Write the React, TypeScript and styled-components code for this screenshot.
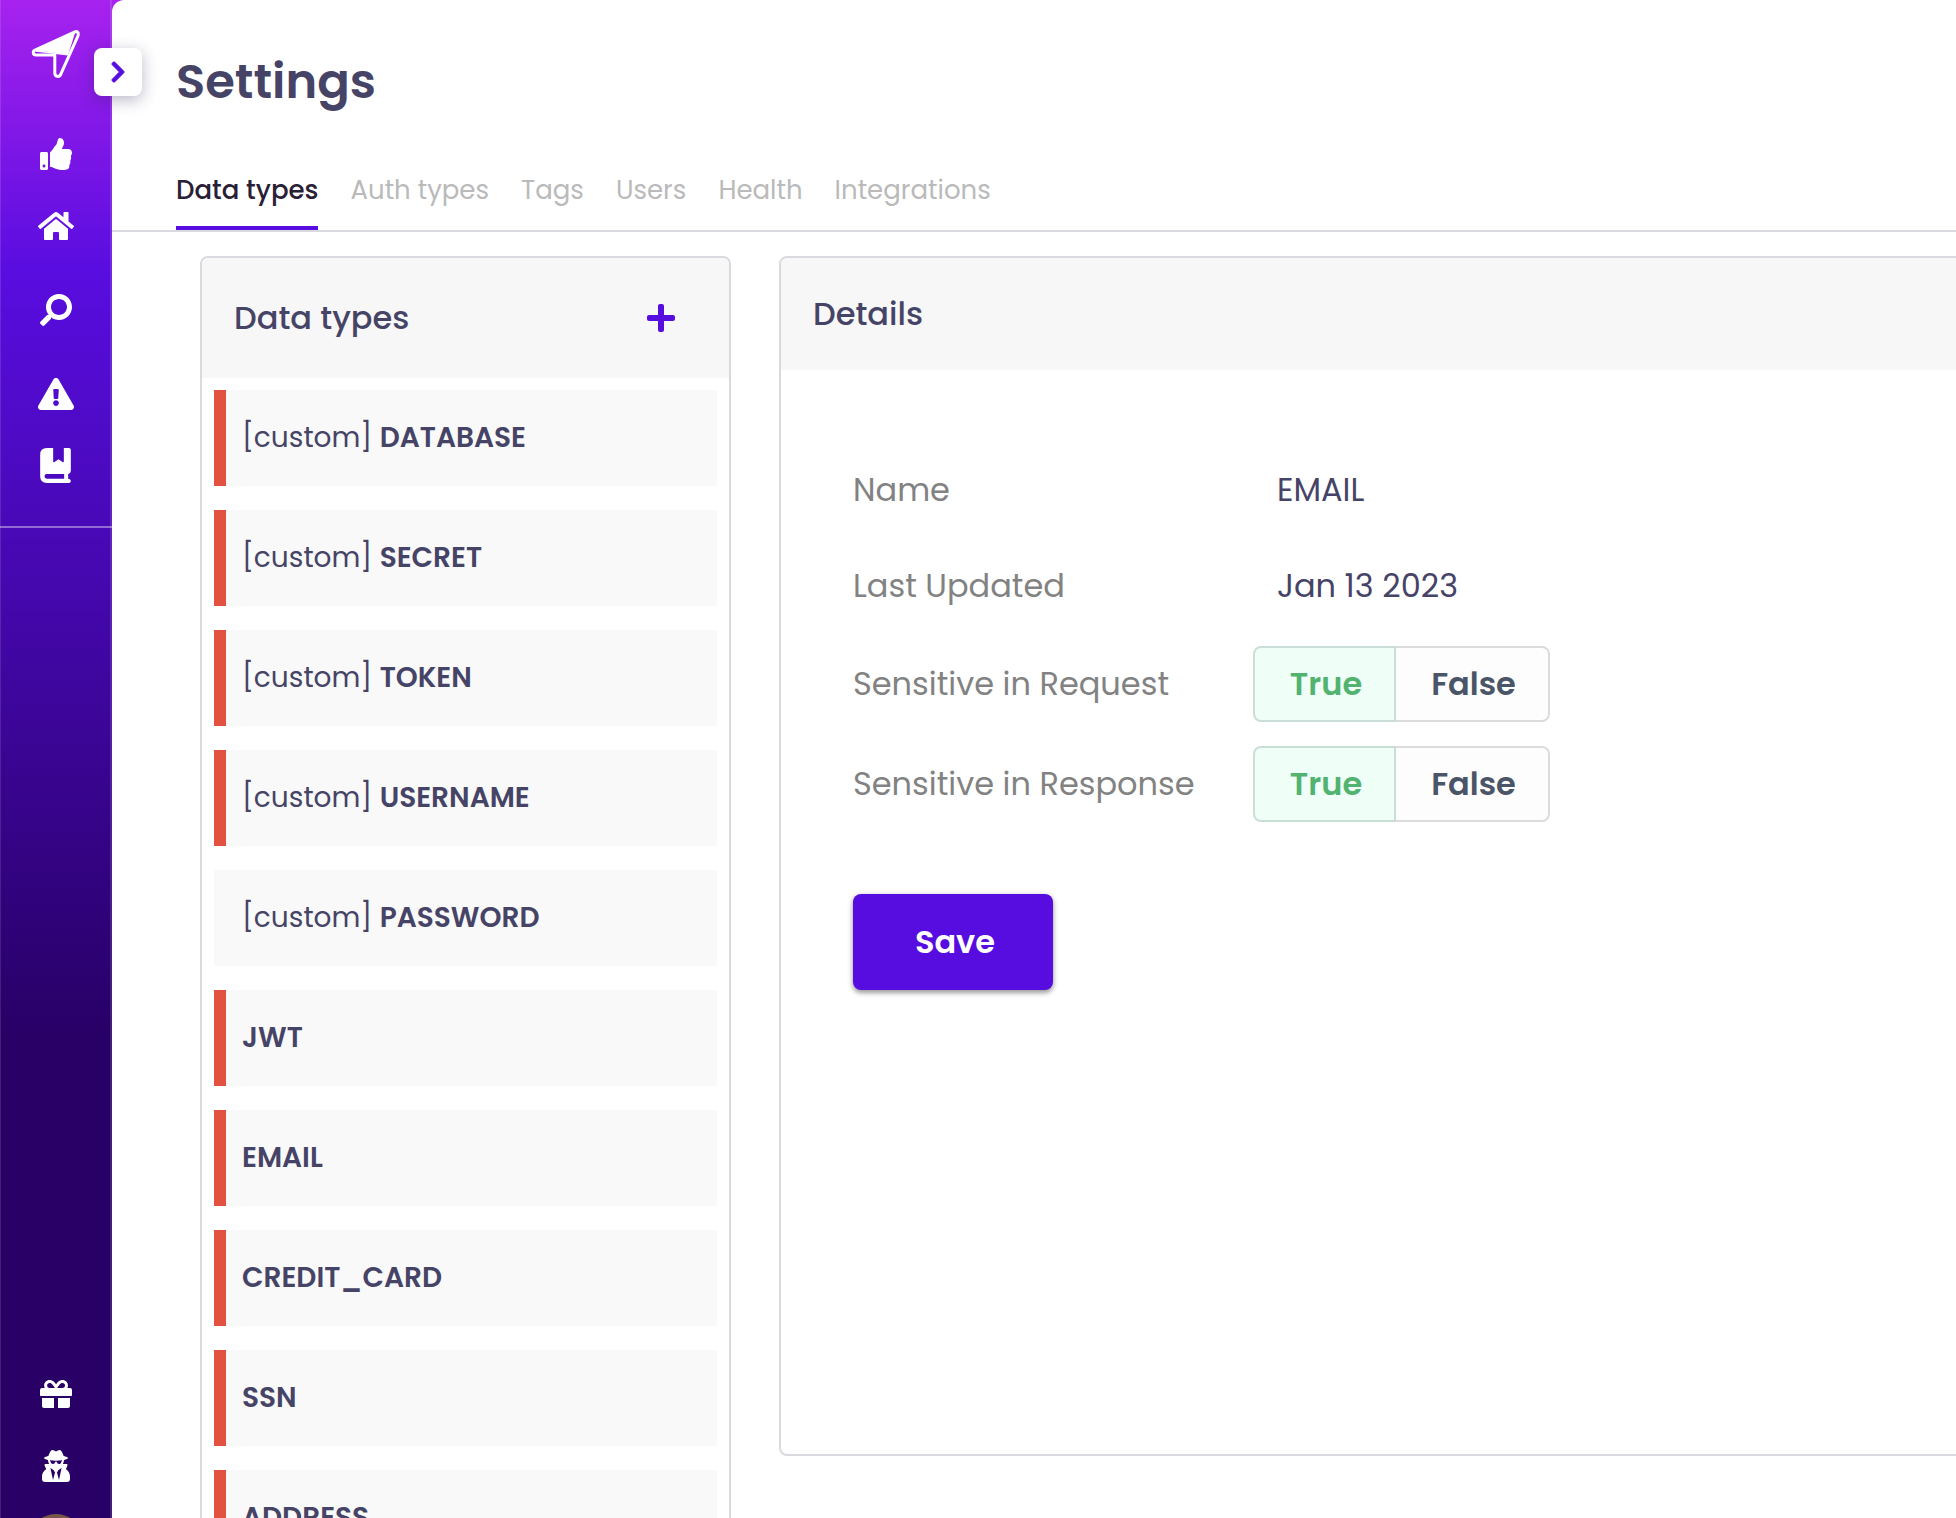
import React from 'react';
import styled, { createGlobalStyle } from 'styled-components';
import {
  FaChevronRight,
  FaExclamationTriangle,
  FaGift,
  FaHome,
  FaPlus,
  FaSearch,
  FaThumbsUp,
  FaUserSecret,
} from 'react-icons/fa';

const color = {
  violet: '#570ddf',
  ink: '#464466',
  line: '#d9d9e0',
  danger: '#e25241',
};

const GlobalStyle = createGlobalStyle`
  *, *::before, *::after { box-sizing: border-box; }
  body {
    margin: 0;
    overflow: hidden;
    background: #fff;
    color: ${color.ink};
    font-family: Poppins, Inter, 'Open Sans', sans-serif;
  }
  button { font: inherit; }
`;

const Shell = styled.div`
  display: flex;
  height: 1518px;
  overflow: hidden;
  background: #a722ee;
`;

const Sidebar = styled.nav`
  position: relative;
  z-index: 1;
  flex: none;
  display: flex;
  flex-direction: column;
  width: 112px;
  height: 1518px;
  border-left: 1px solid rgba(255, 255, 255, 0.12);
  border-right: 2px solid rgba(255, 255, 255, 0.12);
  background: linear-gradient(180deg, #a722ee 0, #590de0 270px, #280066 1035px);
  background-origin: border-box;
  color: #fff;
`;

const LogoArea = styled.div`
  display: flex;
  flex: none;
  justify-content: center;
  height: 118px;
  padding-top: 28px;
  padding-left: 1px;
`;

const NavItem = styled.a<{ $size?: number; $spaced?: boolean; $flip?: boolean }>`
  display: flex;
  flex: none;
  align-items: center;
  justify-content: center;
  height: 72px;
  margin-top: ${(p) => (p.$spaced ? 12 : 0)}px;
  padding-left: 1px;
  font-size: ${(p) => p.$size ?? 32}px;

  svg {
    transform: ${(p) => (p.$flip ? 'scaleX(-1)' : 'none')};
  }
`;

const NavDivider = styled.div`
  flex: none;
  height: 2px;
  margin: 24px -2px 0 -1px;
  background: rgba(255, 255, 255, 0.4);
`;

const NavFooter = styled.div`
  display: flex;
  flex-direction: column;
  align-items: center;
  height: 160px;
  margin-top: auto;
`;

const Avatar = styled.div`
  flex: none;
  width: 56px;
  height: 56px;
  margin-top: 12px;
  margin-left: 1px;
  border-radius: 50%;
  background: #7a5648;
`;

const ExpandButton = styled.button`
  position: absolute;
  top: 48px;
  left: 93px;
  display: flex;
  align-items: center;
  justify-content: center;
  width: 48px;
  height: 48px;
  padding: 0;
  border: 0;
  border-radius: 8px;
  background: #fff;
  box-shadow: 0 4px 16px rgba(40, 35, 80, 0.32);
  color: ${color.violet};

  svg {
    width: 24px;
    height: 24px;
    stroke: currentColor;
    stroke-width: 16px;
  }
`;

const Main = styled.main`
  flex: 1;
  min-width: 0;
  overflow: hidden;
  border-top-left-radius: 12px;
  background: #fff;
`;

const Title = styled.h1`
  margin: 0;
  padding: 52px 0 0 64px;
  font-size: 48px;
  font-weight: 600;
  line-height: 60px;
`;

const Tabs = styled.div`
  display: flex;
  align-items: flex-end;
  gap: 32px;
  height: 120px;
  padding-left: 64px;
  border-bottom: 2px solid ${color.line};
`;

const Tab = styled.div<{ $active?: boolean }>`
  padding-bottom: ${(p) => (p.$active ? 20 : 24)}px;
  border-bottom: ${(p) => (p.$active ? `4px solid ${color.violet}` : '0')};
  color: ${(p) => (p.$active ? '#2a2036' : '#bababa')};
  font-size: 26px;
  font-weight: ${(p) => (p.$active ? 500 : 400)};
  line-height: 32px;
  white-space: nowrap;
`;

const Columns = styled.div`
  display: flex;
  align-items: flex-start;
  gap: 48px;
  padding: 24px 0 0 88px;
`;

const Card = styled.section<{ $width: number; $height: number }>`
  flex: none;
  width: ${(p) => p.$width}px;
  height: ${(p) => p.$height}px;
  overflow: hidden;
  border: 2px solid ${color.line};
  border-radius: 8px;
`;

const CardHeader = styled.header<{ $height: number }>`
  display: flex;
  align-items: center;
  justify-content: space-between;
  height: ${(p) => p.$height}px;
  padding: 0 54px 0 32px;
  background: #f7f7f7;
  font-size: 32px;
  font-weight: 500;
`;

const AddIcon = styled(FaPlus)`
  width: 28px;
  height: 32px;
  color: ${color.violet};
`;

const TypeList = styled.div`
  display: flex;
  flex-direction: column;
  gap: 24px;
  padding: 12px;
`;

const TypeRow = styled.div<{ $sensitive: boolean }>`
  flex: none;
  height: 96px;
  padding: 0 16px;
  border-left: 12px solid ${(p) => (p.$sensitive ? color.danger : 'transparent')};
  background: #f9f9f9;
  font-size: 28px;
  line-height: 95px;
`;

const TypeName = styled.strong`
  font-weight: 600;
`;

const Fields = styled.div`
  padding: 72px 0 0 72px;
`;

const FieldRow = styled.div<{ $height: number }>`
  display: grid;
  grid-template-columns: 400px auto;
  align-items: center;
  height: ${(p) => p.$height}px;
  font-size: 32px;
`;

const FieldLabel = styled.span`
  color: #828282;
`;

const FieldValue = styled.span`
  padding-left: 24px;
`;

const Toggle = styled.div`
  display: flex;
  width: 297px;
  height: 76px;
  font-weight: 600;
`;

const ToggleOption = styled.button<{ $on?: boolean }>`
  width: ${(p) => (p.$on ? 143 : 154)}px;
  padding: 0 0 0 3px;
  border: 2px solid ${(p) => (p.$on ? '#cbded5' : '#dcdcdc')};
  border-left-width: ${(p) => (p.$on ? 2 : 0)}px;
  border-radius: ${(p) => (p.$on ? '8px 0 0 8px' : '0 8px 8px 0')};
  background: ${(p) => (p.$on ? '#effef7' : '#fdfdfd')};
  color: ${(p) => (p.$on ? '#52b370' : '#4a5568')};
`;

const SaveButton = styled.button`
  width: 200px;
  height: 96px;
  margin-top: 60px;
  padding: 0 0 0 4px;
  border: 0;
  border-radius: 8px;
  background: ${color.violet};
  box-shadow: 0 3px 5px rgba(0, 0, 0, 0.36), 0 0 6px rgba(0, 0, 0, 0.1);
  color: #fff;
  font-size: 32px;
  font-weight: 600;
`;

const Logo = () => (
  <svg width="52" height="52" viewBox="30 28 52 52" fill="none">
    <path
      d="M35 50.1 74.9 31.9c2.3-1 4.3 1.1 3.3 3.4L60.8 74.1c-1.6 3.6-6 2.7-6-1.1V55.1H36c-3.2-.2-3.6-3.8-1-5Z"
      stroke="currentColor"
      strokeWidth="3"
      strokeLinejoin="round"
    />
    <path d="M36 50.4 75.2 32.5 68.2 54.6Z" fill="currentColor" />
    <path d="M36 51 68 54.8" stroke="currentColor" strokeWidth="1.4" />
  </svg>
);

const BookGlyph = styled.svg`
  margin: 0 1px 1px 0;
`;

const BookIcon = () => (
  <BookGlyph width="31" height="35" viewBox="0 0 92 105" fill="currentColor">
    <path
      fillRule="evenodd"
      d="M20 0H39V40Q39 44 43 42L55 34 67 42Q71 44 71 40V0H86Q92 0 92 6V68Q92 75 84 78V92Q92 93 92 98 92 105 84 105H20Q0 105 0 85V20Q0 0 20 0ZM20 78A7 7 0 0 0 20 92H72V78Z"
    />
  </BookGlyph>
);

type DataType = { name: string; custom?: boolean; sensitive?: boolean };

const dataTypes: DataType[] = [
  { name: 'DATABASE', custom: true, sensitive: true },
  { name: 'SECRET', custom: true, sensitive: true },
  { name: 'TOKEN', custom: true, sensitive: true },
  { name: 'USERNAME', custom: true, sensitive: true },
  { name: 'PASSWORD', custom: true },
  { name: 'JWT', sensitive: true },
  { name: 'EMAIL', sensitive: true },
  { name: 'CREDIT_CARD', sensitive: true },
  { name: 'SSN', sensitive: true },
  { name: 'ADDRESS', sensitive: true },
];

const tabs = ['Data types', 'Auth types', 'Tags', 'Users', 'Health', 'Integrations'];

const TrueFalse = () => (
  <Toggle>
    <ToggleOption $on>True</ToggleOption>
    <ToggleOption>False</ToggleOption>
  </Toggle>
);

export default function App() {
  return (
    <>
      <GlobalStyle />
      <Shell>
        <Sidebar>
          <LogoArea>
            <Logo />
          </LogoArea>
          <NavItem><FaThumbsUp /></NavItem>
          <NavItem $size={36}><FaHome /></NavItem>
          <NavItem $spaced $flip><FaSearch /></NavItem>
          <NavItem $spaced $size={36}><FaExclamationTriangle /></NavItem>
          <NavItem><BookIcon /></NavItem>
          <NavDivider />
          <NavFooter>
            <NavItem><FaGift /></NavItem>
            <NavItem><FaUserSecret /></NavItem>
            <Avatar />
          </NavFooter>
          <ExpandButton aria-label="Expand">
            <FaChevronRight />
          </ExpandButton>
        </Sidebar>
        <Main>
          <Title>Settings</Title>
          <Tabs>
            {tabs.map((label, i) => (
              <Tab key={label} $active={i === 0}>
                {label}
              </Tab>
            ))}
          </Tabs>
          <Columns>
            <Card $width={531} $height={1400}>
              <CardHeader $height={120}>
                Data types
                <AddIcon />
              </CardHeader>
              <TypeList>
                {dataTypes.map((d) => (
                  <TypeRow key={d.name} $sensitive={!!d.sensitive}>
                    {d.custom && '[custom] '}
                    <TypeName>{d.name}</TypeName>
                  </TypeRow>
                ))}
              </TypeList>
            </Card>
            <Card $width={1400} $height={1200}>
              <CardHeader $height={112}>Details</CardHeader>
              <Fields>
                <FieldRow $height={96}>
                  <FieldLabel>Name</FieldLabel>
                  <FieldValue>EMAIL</FieldValue>
                </FieldRow>
                <FieldRow $height={96}>
                  <FieldLabel>Last Updated</FieldLabel>
                  <FieldValue>Jan 13 2023</FieldValue>
                </FieldRow>
                <FieldRow $height={100}>
                  <FieldLabel>Sensitive in Request</FieldLabel>
                  <TrueFalse />
                </FieldRow>
                <FieldRow $height={100}>
                  <FieldLabel>Sensitive in Response</FieldLabel>
                  <TrueFalse />
                </FieldRow>
                <SaveButton>Save</SaveButton>
              </Fields>
            </Card>
          </Columns>
        </Main>
      </Shell>
    </>
  );
}
